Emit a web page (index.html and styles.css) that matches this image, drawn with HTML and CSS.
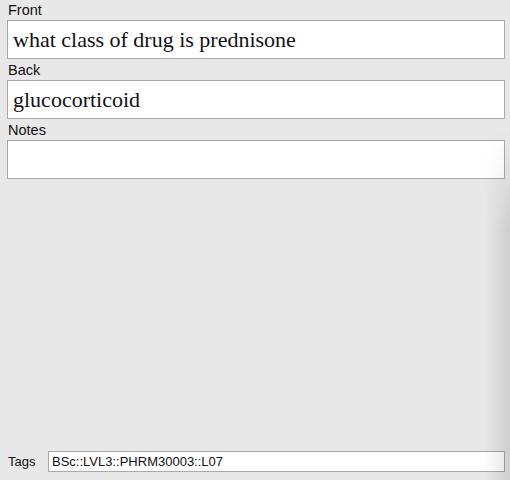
FILE: index.html
```html
<!DOCTYPE html>
<html>
<head>
<meta charset="utf-8">
<link rel="stylesheet" href="styles.css">
</head>
<body>
<div class="editor">
  <div class="fields">
    <div class="field">
      <div class="label">Front</div>
      <div class="box">what class of drug is prednisone</div>
    </div>
    <div class="field">
      <div class="label">Back</div>
      <div class="box">glucocorticoid</div>
    </div>
    <div class="field">
      <div class="label">Notes</div>
      <div class="box"></div>
    </div>
  </div>
  <div class="tags">
    <span class="tags-label">Tags</span>
    <div class="tags-box">BSc::LVL3::PHRM30003::L07</div>
  </div>
  <div class="edge-shadow"></div>
</div>
</body>
</html>
```

FILE: styles.css
```css
html, body {
  margin: 0;
  padding: 0;
  height: 100%;
  background: #e8e8e8;
}
.editor {
  position: relative;
  height: 480px;
  display: flex;
  flex-direction: column;
  font-family: "Liberation Sans", Arial, sans-serif;
  color: #111;
  overflow: hidden;
}
.fields {
  flex: 1;
  padding: 0 5px 0 7px;
}
.field .label {
  font-size: 14.5px;
  line-height: 21px;
  padding-left: 1px;
  height: 20px;
}
.field + .field .label {
  height: 21px;
  line-height: 22px;
}
.box {
  box-sizing: border-box;
  height: 39px;
  background: #fff;
  border: 1px solid #a9a9a9;
  font-family: "Liberation Serif", "Times New Roman", serif;
  font-size: 22px;
  line-height: 37px;
  padding-left: 5px;
  color: #111;
}
.tags {
  display: flex;
  align-items: center;
  padding: 0 5px 8px 8px;
  gap: 12px;
}
.tags-label {
  font-size: 13px;
  width: 28px;
}
.tags-box {
  flex: 1;
  box-sizing: border-box;
  height: 21px;
  background: #fff;
  border: 1px solid #a9a9a9;
  font-size: 13px;
  line-height: 19px;
  padding-left: 3px;
}
.edge-shadow {
  position: absolute;
  top: 130px;
  right: 0;
  width: 26px;
  bottom: 0;
  background: linear-gradient(to right, rgba(0,0,0,0), rgba(0,0,0,0.11));
  -webkit-mask-image: linear-gradient(to bottom, transparent, #000 100px);
  mask-image: linear-gradient(to bottom, transparent, #000 100px);
  pointer-events: none;
}
```
